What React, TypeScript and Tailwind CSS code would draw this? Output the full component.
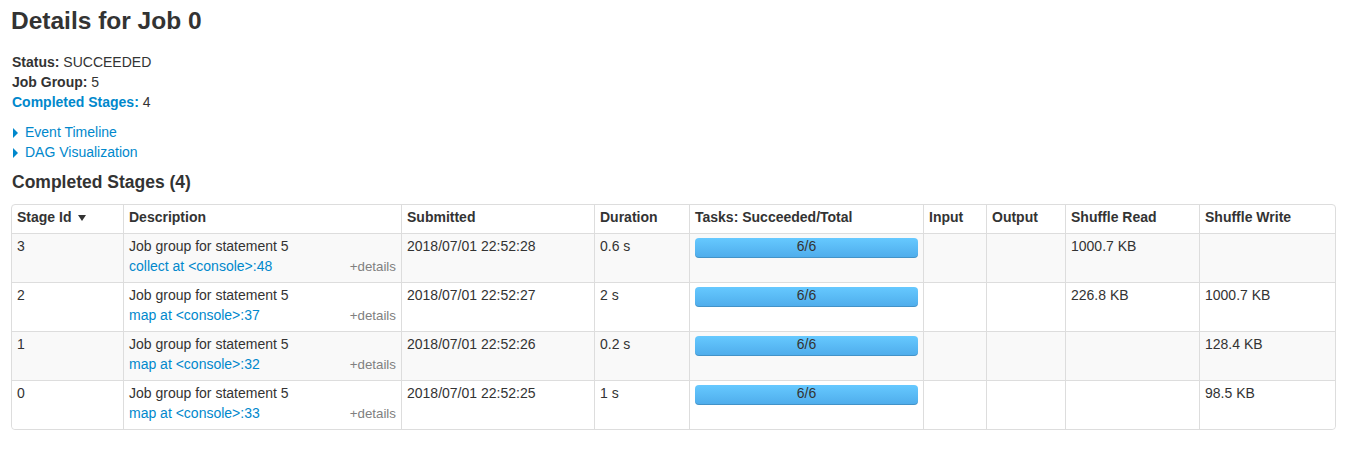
import React from "react";

type Stage = {
  id: number;
  link: string;
  submitted: string;
  duration: string;
  tasks: string;
  shuffleRead: string;
  shuffleWrite: string;
};

const stages: Stage[] = [
  { id: 3, link: "collect at <console>:48", submitted: "2018/07/01 22:52:28", duration: "0.6 s", tasks: "6/6", shuffleRead: "1000.7 KB", shuffleWrite: "" },
  { id: 2, link: "map at <console>:37", submitted: "2018/07/01 22:52:27", duration: "2 s", tasks: "6/6", shuffleRead: "226.8 KB", shuffleWrite: "1000.7 KB" },
  { id: 1, link: "map at <console>:32", submitted: "2018/07/01 22:52:26", duration: "0.2 s", tasks: "6/6", shuffleRead: "", shuffleWrite: "128.4 KB" },
  { id: 0, link: "map at <console>:33", submitted: "2018/07/01 22:52:25", duration: "1 s", tasks: "6/6", shuffleRead: "", shuffleWrite: "98.5 KB" },
];

const headers = [
  "Stage Id",
  "Description",
  "Submitted",
  "Duration",
  "Tasks: Succeeded/Total",
  "Input",
  "Output",
  "Shuffle Read",
  "Shuffle Write",
];

function Caret() {
  return (
    <span className="mr-[7px] inline-block h-0 w-0 border-y-[5px] border-l-[5px] border-y-transparent border-l-[#0088cc] align-[-1px]" />
  );
}

function SortArrow() {
  return (
    <svg width="8" height="6" viewBox="0 0 8 6" className="ml-[7px] inline-block align-[1px]">
      <path d="M0 0 L8 0 L4 6 Z" fill="#333" />
    </svg>
  );
}

function TaskBar({ label }: { label: string }) {
  return (
    <div className="mt-[2px] h-[20px] w-full rounded-[4px] bg-gradient-to-b from-[#66c9ff] to-[#4eaceb] text-center leading-[17px] text-[#333] shadow-[inset_0_-1px_0_rgba(0,0,0,0.15)]">
      {label}
    </div>
  );
}

export default function App() {
  return (
    <div className="min-h-[452px] bg-white pl-[11px] pr-[12px] text-[14px] leading-[20px] text-[#333] [font-family:'Liberation_Sans',Arial,sans-serif]">
      <h3 className="pt-[6px] text-[24.5px] font-bold leading-[30px]">Details for Job 0</h3>

      <ul className="mt-[16px] pl-[1px]">
        <li>
          <strong>Status:</strong> SUCCEEDED
        </li>
        <li>
          <strong>Job Group:</strong> 5
        </li>
        <li>
          <a className="font-bold text-[#0088cc]">Completed Stages:</a> 4
        </li>
      </ul>

      <div className="mt-[10px] pl-[2px] text-[#0088cc]">
        <div>
          <Caret />
          Event Timeline
        </div>
        <div>
          <Caret />
          DAG Visualization
        </div>
      </div>

      <h4 className="mt-[10px] pl-[1px] text-[17.5px] font-bold leading-[20px]">Completed Stages (4)</h4>

      <table className="mt-[12px] w-full table-fixed border-separate border-spacing-0 rounded-[4px] border border-[#ddd]">
        <colgroup>
          <col className="w-[111px]" />
          <col className="w-[278px]" />
          <col className="w-[193px]" />
          <col className="w-[95px]" />
          <col className="w-[234px]" />
          <col className="w-[63px]" />
          <col className="w-[79px]" />
          <col className="w-[134px]" />
          <col />
        </colgroup>
        <thead>
          <tr>
            {headers.map((h, i) => (
              <th
                key={h}
                className={`px-[5px] pt-[2px] pb-[6px] text-left align-bottom font-bold ${i > 0 ? "border-l border-[#ddd]" : ""}`}
              >
                {h}
                {i === 0 && <SortArrow />}
              </th>
            ))}
          </tr>
        </thead>
        <tbody>
          {stages.map((s, r) => {
            const bg = r % 2 === 0 ? "bg-[#f9f9f9]" : "bg-white";
            const cell = `border-t border-[#ddd] px-[5px] pt-[2px] pb-[6px] align-top ${bg}`;
            const cellL = `${cell} border-l`;
            return (
              <tr key={s.id}>
                <td className={`${cell} ${r === stages.length - 1 ? "rounded-bl-[4px]" : ""}`}>{s.id}</td>
                <td className={cellL}>
                  <div>Job group for statement 5</div>
                  <div className="flex h-[20px] items-baseline justify-between">
                    <a className="text-[#0088cc]">{s.link}</a>
                    <span className="text-[13.33px] text-[#808080]">+details</span>
                  </div>
                </td>
                <td className={cellL}>{s.submitted}</td>
                <td className={cellL}>{s.duration}</td>
                <td className={cellL}>
                  <TaskBar label={s.tasks} />
                </td>
                <td className={cellL}></td>
                <td className={cellL}></td>
                <td className={cellL}>{s.shuffleRead}</td>
                <td className={`${cellL} ${r === stages.length - 1 ? "rounded-br-[4px]" : ""}`}>{s.shuffleWrite}</td>
              </tr>
            );
          })}
        </tbody>
      </table>
    </div>
  );
}
